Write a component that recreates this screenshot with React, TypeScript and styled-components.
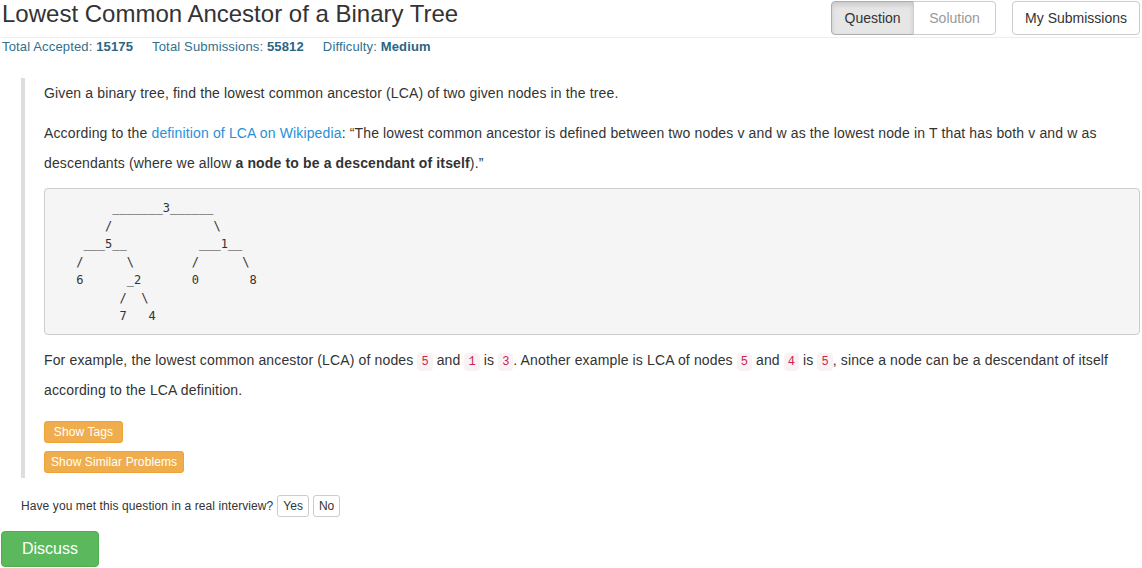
import React from "react";
import styled, { createGlobalStyle } from "styled-components";

const textColor = "#333";
const infoColor = "#31708f";
const linkColor = "#2a8fd6";

const GlobalStyle = createGlobalStyle`
  * {
    box-sizing: border-box;
  }
  body {
    margin: 0;
    background: #fff;
    color: ${textColor};
    font-family: "Liberation Sans", Arial, sans-serif;
    font-size: 14px;
  }
`;

const Page = styled.div`
  width: 1142px;
  padding: 0 2px 0 1px;
`;

const Header = styled.div`
  display: flex;
  align-items: flex-start;
  justify-content: space-between;
  height: 38px;
  padding-top: 1px;
  border-bottom: 1px solid #eee;
`;

const Title = styled.h3`
  margin: -1px 0 0 1px;
  font-size: 24px;
  font-weight: 400;
  line-height: 28px;
  color: ${textColor};
`;

const Actions = styled.div`
  display: flex;
  gap: 16px;
`;

const ButtonGroup = styled.div`
  display: flex;
`;

const TabButton = styled.button<{ $active?: boolean; $muted?: boolean; $pos?: "left" | "right" | "single" }>`
  width: ${(p) => (p.$pos === "single" ? "auto" : "83px")};
  height: 34px;
  padding: 6px 12px;
  font-family: inherit;
  font-size: 14px;
  line-height: 20px;
  color: ${(p) => (p.$muted ? "#999" : textColor)};
  background: ${(p) => (p.$active ? "#e6e6e6" : "#fff")};
  border: 1px solid ${(p) => (p.$active ? "#adadad" : "#ccc")};
  box-shadow: ${(p) => (p.$active ? "inset 0 3px 5px rgba(0,0,0,0.125)" : "none")};
  border-radius: ${(p) =>
    p.$pos === "left" ? "4px 0 0 4px" : p.$pos === "right" ? "0 4px 4px 0" : "4px"};
  margin-left: ${(p) => (p.$pos === "right" ? "-1px" : "0")};
  cursor: pointer;
`;

const Stats = styled.div`
  display: flex;
  gap: 19px;
  padding-left: 1px;
  font-size: 13px;
  line-height: 17px;
  letter-spacing: 0.15px;
  color: ${infoColor};

  b {
    color: #2b6584;
  }
`;

const Quote = styled.blockquote`
  margin: 23px 0 0 20px;
  padding: 0 0 5px 19px;
  border-left: 4px solid #ddd;
`;

const Para = styled.p`
  margin: 0 0 10px;
  line-height: 30px;
  letter-spacing: 0.14px;

  a {
    color: ${linkColor};
    text-decoration: none;
  }
`;

const Code = styled.code`
  padding: 2px 4px;
  font-family: "Liberation Mono", monospace;
  font-size: 12px;
  line-height: 1;
  letter-spacing: 0;
  color: #c7254e;
  background: #f9f2f4;
  border-radius: 4px;
`;

const Pre = styled.pre`
  margin: 0 0 10px;
  padding: 9.5px;
  font-family: "DejaVu Sans Mono", "Liberation Mono", monospace;
  font-size: 12px;
  line-height: 18px;
  color: ${textColor};
  background: #f5f5f5;
  border: 1px solid #ccc;
  border-radius: 4px;
`;

const TagButtons = styled.div`
  display: flex;
  flex-direction: column;
  align-items: flex-start;
  gap: 8px;
  margin-top: 16px;
`;

const WarnButton = styled.button<{ $minWidth?: number }>`
  min-width: ${(p) => (p.$minWidth ? `${p.$minWidth}px` : "auto")};
  height: 22px;
  padding: 1px 6px;
  font-family: inherit;
  font-size: 12px;
  line-height: 18px;
  letter-spacing: 0.1px;
  color: #fff;
  background: #f0ad4e;
  border: 1px solid #eea236;
  border-radius: 3px;
  cursor: pointer;
`;

const Interview = styled.div`
  display: flex;
  align-items: center;
  gap: 4px;
  margin: 17px 0 14px 20px;
  font-size: 12px;
  letter-spacing: 0.09px;
`;

const SmallButton = styled.button`
  height: 22px;
  padding: 1px 5px;
  font-family: inherit;
  font-size: 12px;
  line-height: 18px;
  color: ${textColor};
  background: #fff;
  border: 1px solid #ccc;
  border-radius: 3px;
  cursor: pointer;
`;

const Discuss = styled.button`
  height: 36px;
  padding: 6px 20px;
  font-family: inherit;
  font-size: 16px;
  line-height: 22px;
  color: #fff;
  background: #5cb85c;
  border: 1px solid #4cae4c;
  border-radius: 4px;
  cursor: pointer;
`;

const tree = `        _______3______
       /              \\
    ___5__          ___1__
   /      \\        /      \\
   6      _2       0       8
         /  \\
         7   4`;

export default function App() {
  return (
    <Page>
      <GlobalStyle />
      <Header>
        <Title>Lowest Common Ancestor of a Binary Tree</Title>
        <Actions>
          <ButtonGroup>
            <TabButton $active $pos="left">Question</TabButton>
            <TabButton $muted $pos="right">Solution</TabButton>
          </ButtonGroup>
          <TabButton $pos="single">My Submissions</TabButton>
        </Actions>
      </Header>
      <Stats>
        <span>Total Accepted: <b>15175</b></span>
        <span>Total Submissions: <b>55812</b></span>
        <span>Difficulty: <b>Medium</b></span>
      </Stats>
      <Quote>
        <Para>Given a binary tree, find the lowest common ancestor (LCA) of two given nodes in the tree.</Para>
        <Para>
          According to the <a href="#">definition of LCA on Wikipedia</a>: “The lowest common ancestor is defined
          between two nodes v and w as the lowest node in T that has both v and w as descendants (where we allow{" "}
          <b>a node to be a descendant of itself</b>).”
        </Para>
        <Pre>{tree}</Pre>
        <Para>
          For example, the lowest common ancestor (LCA) of nodes <Code>5</Code> and <Code>1</Code> is <Code>3</Code>.
          Another example is LCA of nodes <Code>5</Code> and <Code>4</Code> is <Code>5</Code>, since a node can be a
          descendant of itself according to the LCA definition.
        </Para>
        <TagButtons>
          <WarnButton $minWidth={79}>Show Tags</WarnButton>
          <WarnButton>Show Similar Problems</WarnButton>
        </TagButtons>
      </Quote>
      <Interview>
        <span>Have you met this question in a real interview?</span>
        <SmallButton>Yes</SmallButton>
        <SmallButton>No</SmallButton>
      </Interview>
      <Discuss>Discuss</Discuss>
    </Page>
  );
}
